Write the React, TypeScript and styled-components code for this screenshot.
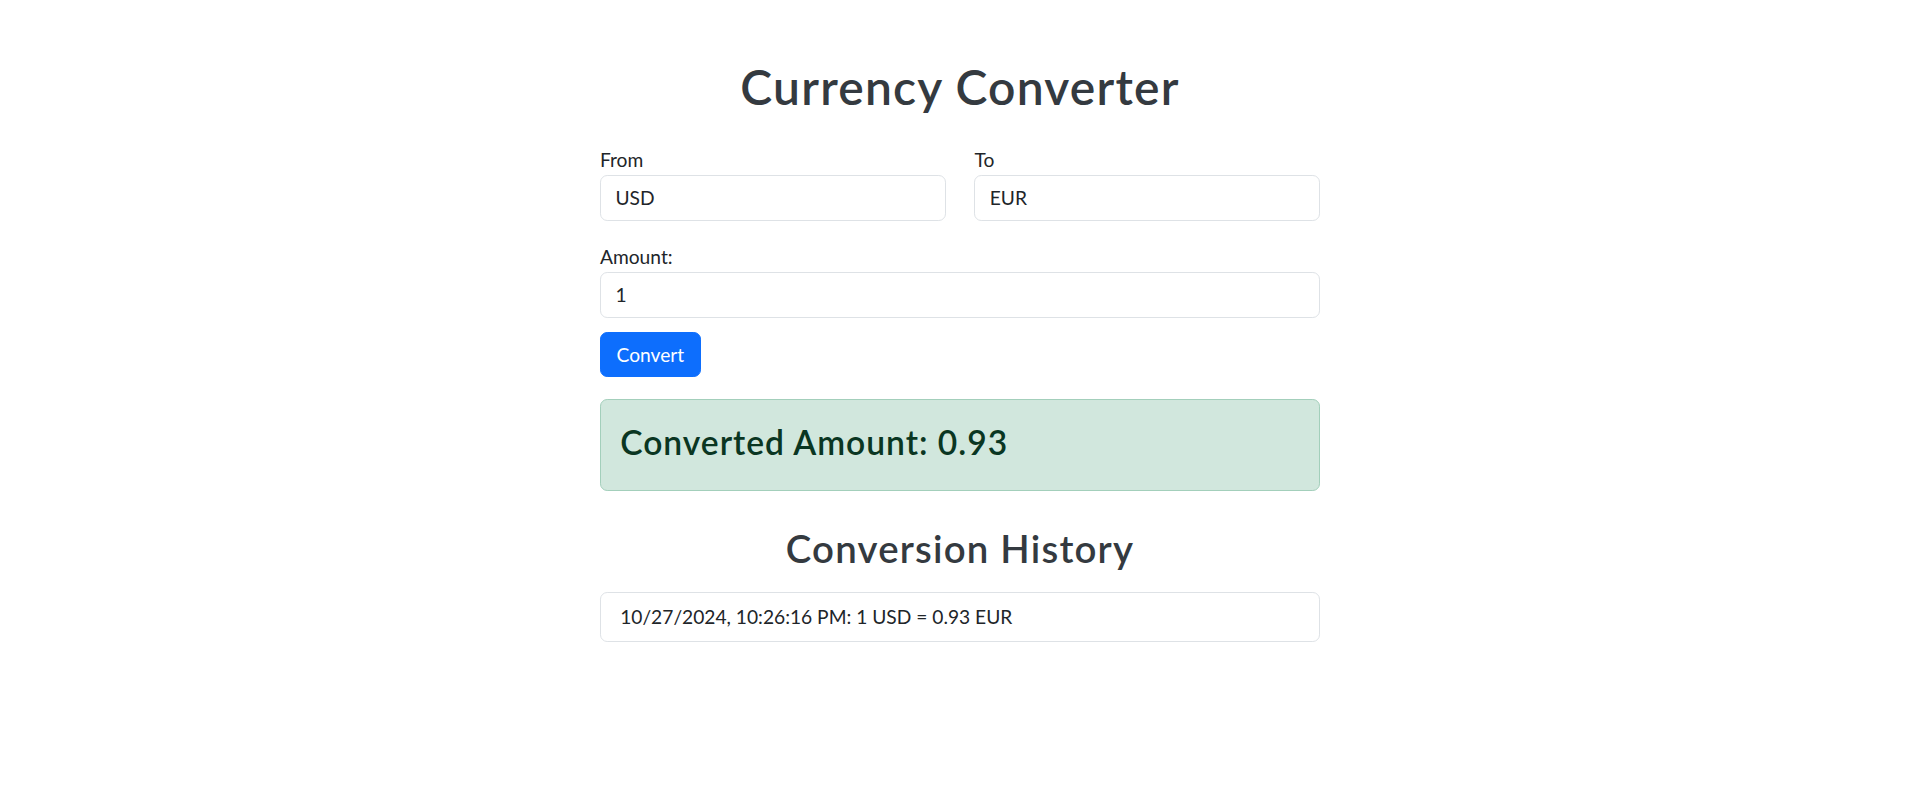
import React from 'react';
import styled, { createGlobalStyle } from 'styled-components';

const FONT = `'Segoe UI', Lato, 'Noto Sans', 'Liberation Sans', sans-serif`;

const GlobalStyle = createGlobalStyle`
  * {
    box-sizing: border-box;
  }
  body {
    margin: 0;
    background: #fff;
    color: #212529;
    font-family: ${FONT};
    font-size: 19.2px;
    line-height: 1.5;
  }
`;

const Container = styled.div`
  width: 720px;
  margin: 57.6px auto 0;
`;

const Title = styled.h1`
  margin: 0 0 31.2px;
  font-size: 48px;
  font-weight: 600;
  line-height: 1.2;
  letter-spacing: 1.2px;
  text-align: center;
  color: #343a40;
`;

const Row = styled.div`
  display: grid;
  grid-template-columns: 1fr 1fr;
  column-gap: 28.8px;
  margin-bottom: 22.4px;
`;

const Field = styled.div`
  display: flex;
  flex-direction: column;
`;

const Label = styled.label`
  display: block;
  font-size: 19.2px;
  line-height: 28.8px;
  color: #212529;
`;

interface InputProps {
  $gapBelow?: number;
}

const Input = styled.input<InputProps>`
  width: 100%;
  height: 45.6px;
  margin: 0 0 ${(p) => p.$gapBelow ?? 0}px;
  padding: 0 14.4px;
  border: 1px solid #dee2e6;
  border-radius: 7.2px;
  outline: none;
  background: #fff;
  color: #212529;
  font-family: ${FONT};
  font-size: 19.2px;
`;

const ConvertButton = styled.button`
  display: block;
  height: 45.6px;
  padding: 0 15.6px;
  border: 1px solid #0d6efd;
  border-radius: 7.2px;
  background: #0d6efd;
  color: #fff;
  font-family: ${FONT};
  font-size: 19.2px;
  cursor: pointer;
`;

const Alert = styled.div`
  margin-top: 21.6px;
  padding: 22px 19.2px 20px;
  border: 1px solid #a3cfbb;
  border-radius: 7.2px;
  background: #d1e7dd;
`;

const ResultText = styled.h3`
  margin: 0 0 8.4px;
  font-size: 33.6px;
  font-weight: 600;
  line-height: 1.2;
  letter-spacing: 1px;
  color: #0a3622;
`;

const HistoryTitle = styled.h2`
  margin: 34px 0 20px;
  font-size: 38.4px;
  font-weight: 600;
  line-height: 1.2;
  letter-spacing: 1.2px;
  text-align: center;
  color: #343a40;
`;

const HistoryList = styled.ul`
  margin: 0;
  padding: 0;
  list-style: none;
  border: 1px solid #dee2e6;
  border-radius: 7.2px;
`;

const HistoryItem = styled.li`
  padding: 10px 19.2px;
  line-height: 28.8px;
  color: #212529;
`;

const history = ['10/27/2024, 10:26:16 PM: 1 USD = 0.93 EUR'];

export default function App() {
  return (
    <>
      <GlobalStyle />
      <Container>
        <Title>Currency Converter</Title>
        <Row>
          <Field>
            <Label>From</Label>
            <Input defaultValue="USD" />
          </Field>
          <Field>
            <Label>To</Label>
            <Input defaultValue="EUR" />
          </Field>
        </Row>
        <Field>
          <Label>Amount:</Label>
          <Input type="text" defaultValue="1" $gapBelow={14} />
        </Field>
        <ConvertButton>Convert</ConvertButton>
        <Alert>
          <ResultText>Converted Amount: 0.93</ResultText>
        </Alert>
        <HistoryTitle>Conversion History</HistoryTitle>
        <HistoryList>
          {history.map((h) => (
            <HistoryItem key={h}>{h}</HistoryItem>
          ))}
        </HistoryList>
      </Container>
    </>
  );
}
